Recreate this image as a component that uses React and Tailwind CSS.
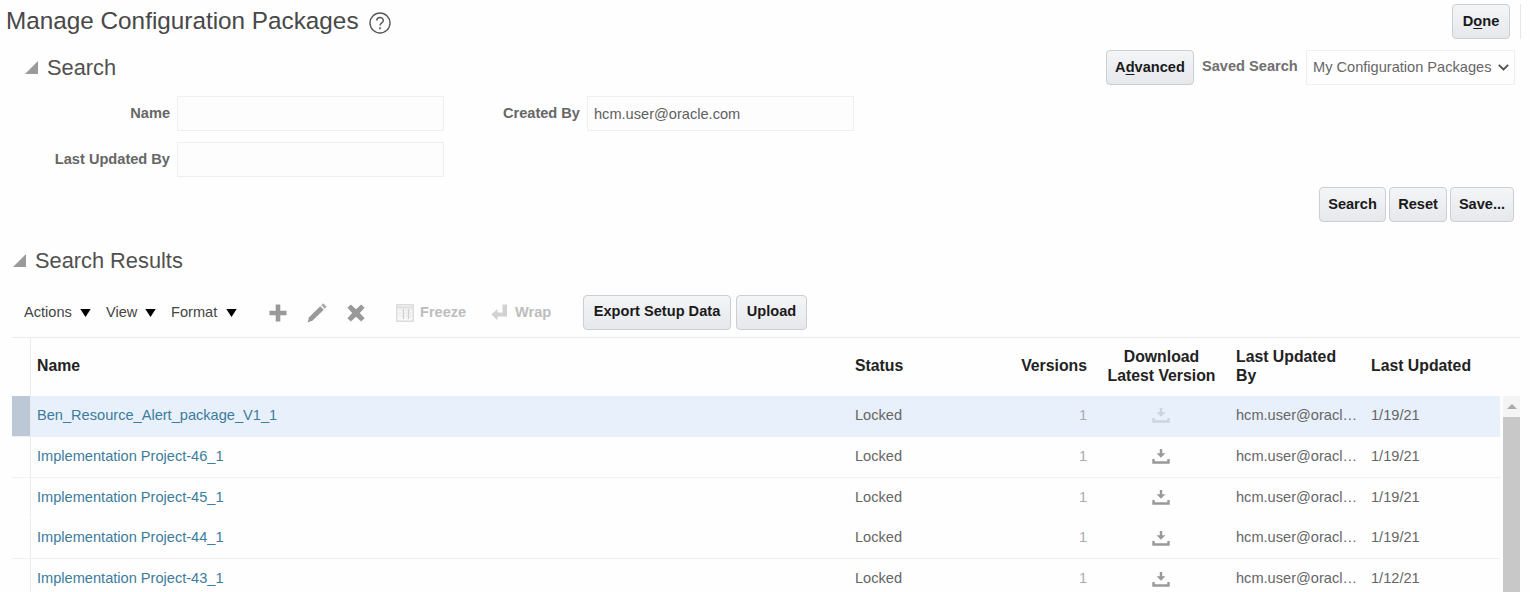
import React from "react";

const COLS =
  "grid grid-cols-[19px_818px_150px_94px_136px_136px_135px] shrink-0";

const ROWS = [
  { name: "Ben_Resource_Alert_package_V1_1", date: "1/19/21", selected: true, line: false },
  { name: "Implementation Project-46_1", date: "1/19/21", line: true },
  { name: "Implementation Project-45_1", date: "1/19/21", line: false },
  { name: "Implementation Project-44_1", date: "1/19/21", line: true },
  { name: "Implementation Project-43_1", date: "1/12/21", line: false },
];

function Button({ className, children }) {
  return (
    <button
      className={
        "flex h-[35px] shrink-0 items-center justify-center rounded-[4px] border-[1.5px] border-[#c9cfd5] bg-linear-to-b from-[#f3f5f7] to-[#e6e8ec] text-[14.6px] font-bold text-[#1a1a1a] " +
        className
      }
    >
      {children}
    </button>
  );
}

function Disclosure() {
  return (
    <svg width="13" height="13" viewBox="0 0 13 13" className="-mt-px shrink-0">
      <path d="M13 0V13H0Z" fill="#9a9a9a" />
    </svg>
  );
}

function Field({ label, value, labelClass }) {
  return (
    <div className="flex">
      <label
        className={
          "whitespace-nowrap pr-[7px] pt-[7px] text-right font-bold text-[#666] " + labelClass
        }
      >
        {label}
      </label>
      <div className="flex h-[35px] w-[267px] items-center border border-[#efefef] bg-[#fdfdfd] pl-[6px] pt-[2px] text-[#606060]">
        {value}
      </div>
    </div>
  );
}

function Menu({ label, className }) {
  return (
    <div className={"flex shrink-0 items-center justify-between text-[#444] " + className}>
      <span className="pt-[2px]">{label}</span>
      <svg width="11" height="8" viewBox="0 0 11 8" className="mt-[3px]">
        <path d="M0.3 0H10.7L5.5 8Z" fill="#000" />
      </svg>
    </div>
  );
}

function Download({ faded }) {
  return (
    <svg
      width="18"
      height="16"
      viewBox="0 0 18 16"
      fill={faded ? "#cdd4dd" : "#999"}
      className="mt-px"
    >
      <path d="M7.8 0H10.2V4.2H13.4L9 8.8L4.6 4.2H7.8Z" />
      <path d="M0.3 10H2.7V12.2H15.3V10H17.7V14.8H0.3Z" />
    </svg>
  );
}

function Toolbar() {
  return (
    <div className="flex h-[42px] items-start pl-6">
      <div className="flex h-[35px] items-center pb-[2px]">
        <Menu label="Actions" className="w-[67px]" />
        <Menu label="View" className="ml-[15px] w-[50px]" />
        <Menu label="Format" className="ml-[15px] w-[66px]" />
        <svg width="18" height="18" viewBox="0 0 18 18" className="ml-[32px] mt-[2px]">
          <path d="M6.7 0.5H11.3V6.7H17.5V11.3H11.3V17.5H6.7V11.3H0.5V6.7H6.7Z" fill="#999" />
        </svg>
        <svg width="20" height="20" viewBox="0 0 20 20" className="ml-[20px] mt-[2px]" fill="#999">
          <path d="M13.2 3.2L16.8 6.8L5.4 17.8L0.6 19.4L2.1 14.3Z" />
          <path d="M14.2 2.2L16.3 0.3L19.7 3.7L17.8 5.8Z" fill="#aaa" />
        </svg>
        <svg width="18" height="18" viewBox="0 0 18 18" className="ml-[20px] mt-[2px]">
          <path
            d="M3.8 0.4L9 5.2L14.2 0.4L17.6 3.8L12.8 9L17.6 14.2L14.2 17.6L9 12.8L3.8 17.6L0.4 14.2L5.2 9L0.4 3.8Z"
            fill="#999"
          />
        </svg>
        <svg width="18" height="18" viewBox="0 0 18 18" className="ml-[31px] mt-[2px]" fill="none">
          <rect x="0.8" y="0.8" width="16.4" height="16.4" fill="#f8f8f8" stroke="#dcdcdc" strokeWidth="1.5" />
          <path d="M1 3.5H17" stroke="#dcdcdc" strokeWidth="2" />
          <path d="M7.5 5V15M12.5 5V15" stroke="#cfcfcf" strokeWidth="1.5" />
          <path d="M9.2 6H11M9.2 9H11M9.2 12H11M3 6H6M3 9H6M3 12H6M14 6H16M14 9H16M14 12H16" stroke="#e4e4e4" />
        </svg>
        <span className="ml-[6px] w-[71px] pt-[2px] font-bold text-[#bdbdbd]">Freeze</span>
        <svg width="17" height="17" viewBox="0 0 17 17" className="mt-[2px]" fill="#d2d2d2">
          <path d="M11.5 0.5H16V12.5H6.5V16.5L0.5 10.3L6.5 5V8.5H11.5Z" />
        </svg>
        <span className="ml-[7px] w-[68px] pt-[2px] font-bold text-[#bdbdbd]">Wrap</span>
      </div>
      <Button className="w-[148px] pb-[2px]">Export Setup Data</Button>
      <Button className="ml-[5px] w-[71px] pb-[2px]">Upload</Button>
    </div>
  );
}

function Results() {
  return (
    <div className="ml-3 mr-[10px] h-[255px] overflow-hidden border-t border-[#ebebeb]">
      <div className={COLS + " h-[58px] items-center whitespace-nowrap text-[15.8px] font-bold leading-[19px] text-[#222]"}>
        <div className="h-full border-r border-[#ebebeb]" />
        <div className="pb-[3px] pl-[6px]">Name</div>
        <div className="pb-[3px] pl-[6px]">Status</div>
        <div className="pb-[3px] pr-[6px] text-right">Versions</div>
        <div className="pb-[3px] pl-px text-center">
          Download
          <br />
          Latest Version
        </div>
        <div className="pb-[3px] pl-[7px]">
          Last Updated
          <br />
          By
        </div>
        <div className="pb-[3px] pl-[6px]">Last Updated</div>
      </div>
      <div className="flex">
        <div className="w-[1488px] shrink-0">
          {ROWS.map((r) => (
            <div
              key={r.name}
              className={
                COLS +
                " h-[40.8px] border-b text-[#666] " +
                (r.selected ? "bg-[#e8f0fb] " : "") +
                (r.line ? "border-[#f1f1f1]" : "border-transparent")
              }
            >
              <div className={"border-r border-[#ebebeb] " + (r.selected ? "bg-[#bdc8d6]" : "")} />
              <div className="flex items-center pl-[6px] text-[#3c7c9c]">{r.name}</div>
              <div className="flex items-center pl-[6px]">Locked</div>
              <div className="flex items-center justify-end pr-[6px] text-[#aaa]">1</div>
              <div className="flex items-center justify-center pr-px">
                <Download faded={r.selected} />
              </div>
              <div className="flex items-center pl-[7px]">hcm.user@oracl…</div>
              <div className="flex items-center pl-[6px]">{r.date}</div>
            </div>
          ))}
        </div>
        <div className="ml-[3px] flex w-[17px] flex-col bg-[#f4f4f4]">
          <div className="flex h-[21px] items-center justify-center">
            <svg width="10" height="5" viewBox="0 0 10 5">
              <path d="M5 0L10 5H0Z" fill="#aaa" />
            </svg>
          </div>
          <div className="grow bg-[#c8c8c8]" />
        </div>
      </div>
    </div>
  );
}

export default function App() {
  return (
    <div className="flex h-[592px] w-[1530px] flex-col overflow-hidden bg-[#fefefe] font-['Liberation_Sans',Arial,sans-serif] text-[14.6px]">
      <header className="flex h-[50px] shrink-0 justify-between pl-[6px] pr-[9px] pt-[4px]">
        <div className="flex h-[34px] items-center">
          <h1 className="text-[24.3px] leading-[34px] text-[#484848]">
            Manage Configuration Packages
          </h1>
          <svg width="22" height="22" viewBox="0 0 22 22" fill="none" stroke="#5a5a5a" className="ml-[10px] mt-[3px]">
            <circle cx="11" cy="11" r="10" strokeWidth="1.4" />
            <path d="M7.8 8.6C7.8 4.6 14.3 4.6 14.3 8.4C14.3 10.8 11 11 11 13.6" strokeWidth="1.5" />
            <path d="M11 15.2V17.2" strokeWidth="1.6" />
          </svg>
        </div>
        <div className="flex h-[35px] border-r border-[#e6e6e6] pr-[10px]">
          <Button className="w-[58px]">
            <span>
              D<span className="underline underline-offset-2">o</span>ne
            </span>
          </Button>
        </div>
      </header>

      <div className="flex h-[46px] shrink-0 justify-between pl-[25px] pr-[15px]">
        <div className="flex h-[35px] items-center">
          <Disclosure />
          <h2 className="ml-[9px] pt-px text-[21.8px] text-[#505050]">Search</h2>
        </div>
        <div className="flex h-[35px] whitespace-nowrap">
          <Button className="w-[88px]">
            <span>
              A<span className="underline underline-offset-2">d</span>vanced
            </span>
          </Button>
          <span className="ml-[8px] w-[104px] pt-[6px] font-bold text-[#707070]">Saved Search</span>
          <div className="flex h-[35px] w-[209px] items-center justify-between border border-[#efefef] pl-[6px] pr-[5px] text-[#666]">
            My Configuration Packages
            <svg width="11" height="7" viewBox="0 0 11 7" fill="none" stroke="#505050" strokeWidth="1.8" className="shrink-0">
              <path d="M0.8 0.8L5.5 5.5L10.2 0.8" />
            </svg>
          </div>
        </div>
      </div>

      <div className="flex h-[91px] shrink-0">
        <div className="flex flex-col gap-[11px]">
          <Field label="Name" labelClass="w-[177px]" />
          <Field label="Last Updated By" labelClass="w-[177px]" />
        </div>
        <Field label="Created By" value="hcm.user@oracle.com" labelClass="w-[143px]" />
      </div>

      <div className="flex h-[57px] shrink-0 justify-end gap-[3px] pr-[16px]">
        <Button className="w-[67px]">Search</Button>
        <Button className="w-[58px]">Reset</Button>
        <Button className="w-[64px]">Save...</Button>
      </div>

      <div className="flex h-[51px] shrink-0 items-start pl-[13px]">
        <div className="flex h-[34px] items-center">
          <Disclosure />
          <h2 className="ml-[9px] text-[21.8px] text-[#505050]">Search Results</h2>
        </div>
      </div>

      <Toolbar />
      <Results />
    </div>
  );
}
